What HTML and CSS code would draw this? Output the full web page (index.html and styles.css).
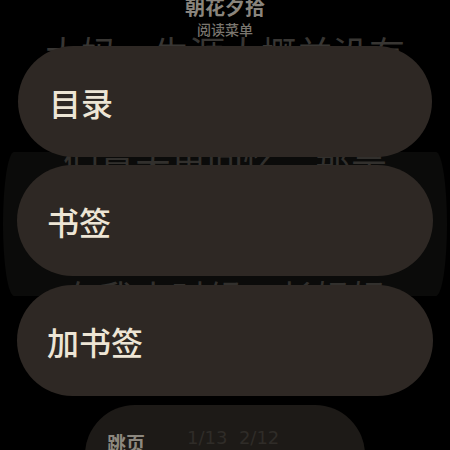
FILE: index.html
```html
<!DOCTYPE html>
<html lang="zh">
<head>
<meta charset="utf-8">
<link rel="stylesheet" href="styles.css">
</head>
<body>
<div class="reader">
  <p class="rline first">大妈，生涯大概并没有</p>
  <div class="panel">
    <p class="rline second">们意夫再回忆，那是</p>
    <p class="rline third">在我小时候，长妈妈</p>
  </div>
</div>

<div class="menu">
  <header class="menu-head">
    <div class="book-title">朝花夕拾</div>
    <div class="menu-sub">阅读菜单</div>
  </header>
  <div class="pill pill-first">目录</div>
  <div class="pill">书签</div>
  <div class="pill">加书签</div>
  <div class="jump">
    <span class="jump-label">跳页</span>
    <span class="jump-pages">1/13&nbsp; 2/12</span>
  </div>
</div>
</body>
</html>
```

FILE: styles.css
```css
html, body {
  margin: 0;
  padding: 0;
  background: #000;
  width: 450px;
  height: 450px;
  overflow: hidden;
  font-family: "Noto Sans CJK SC", "Noto Sans", sans-serif;
}

.reader {
  padding-top: 32px;
}

.rline {
  margin: 0;
  font-size: 36px;
  line-height: 40px;
  height: 40px;
  text-align: center;
  color: #383633;
  white-space: nowrap;
  overflow: hidden;
}

.panel {
  margin: 80px 3px 0;
  height: 144px;
  background: #0b0b0a;
  border-radius: 14px / 90px;
  overflow: hidden;
}

.second {
  margin-top: -12px;
  color: #32302d;
}

.third {
  margin-top: 96px;
  color: #32302d;
}

.menu {
  position: absolute;
  inset: 0;
  display: flex;
  flex-direction: column;
  align-items: stretch;
  overflow: hidden;
}

.menu > * {
  flex-shrink: 0;
}

.menu-head {
  height: 46px;
  display: flex;
  flex-direction: column;
  align-items: center;
}

.book-title {
  font-size: 20px;
  line-height: 20px;
  margin-top: -3px;
  font-weight: 700;
  color: #8a857d;
}

.menu-sub {
  font-size: 14px;
  line-height: 16px;
  margin-top: 4px;
  font-weight: 500;
  color: #7a766f;
}

.pill {
  height: 111px;
  margin: 0 17px 9px;
  padding-left: 30px;
  border-radius: 56px;
  background: #2e2824;
  color: #ede5d5;
  font-size: 32px;
  font-weight: 500;
  display: flex;
  align-items: center;
}

.pill-first {
  margin: 0 18px 8px;
  padding-left: 31px;
}

.jump {
  margin: 0 85px;
  height: 110px;
  border-radius: 50px;
  background: #1d1a17;
  padding: 22px 0 0 22px;
  display: flex;
  align-items: flex-start;
  gap: 42px;
}

.jump-label {
  font-size: 19px;
  font-weight: 700;
  color: #8d887f;
  margin-top: 2px;
}

.jump-pages {
  font-family: "DejaVu Sans", sans-serif;
  font-size: 18px;
  color: #2f2c28;
}
```
